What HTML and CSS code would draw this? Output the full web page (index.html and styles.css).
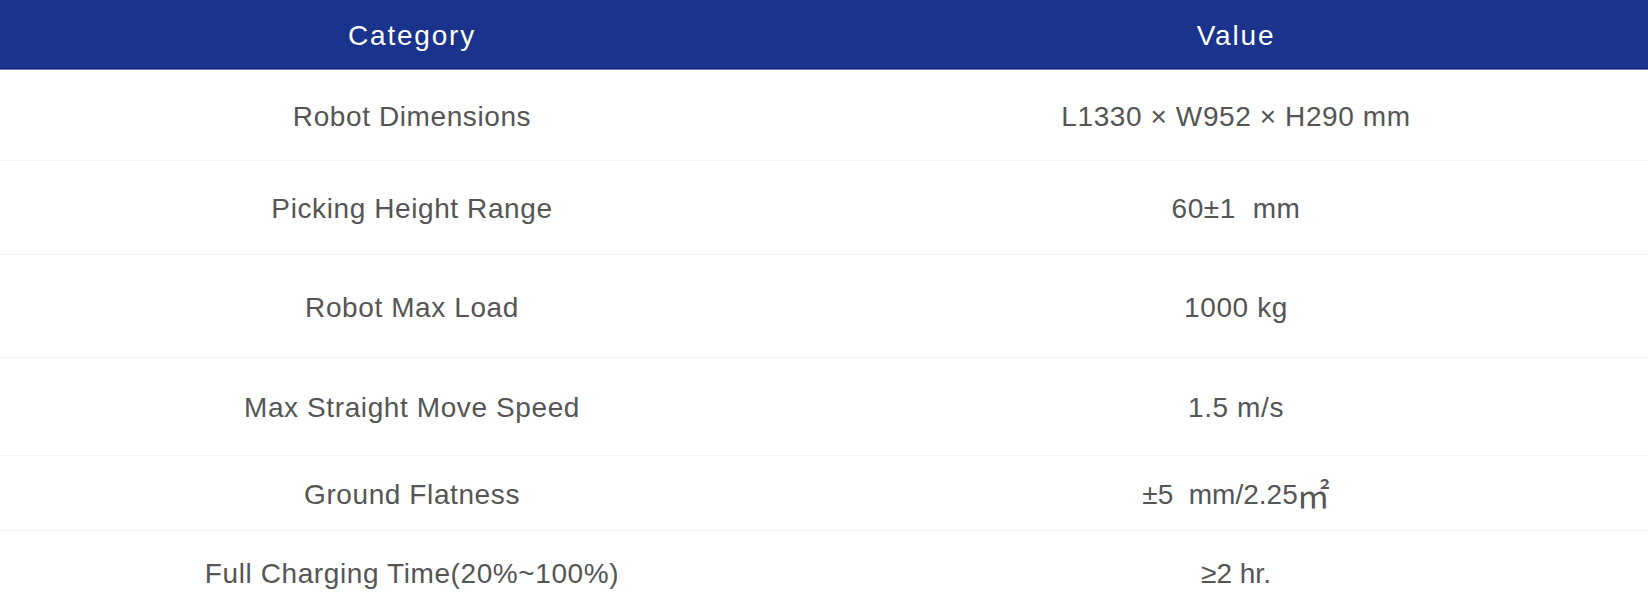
FILE: index.html
```html
<!DOCTYPE html>
<html>
<head>
<meta charset="utf-8">
<link rel="stylesheet" href="styles.css">
</head>
<body>
<div class="spec">
  <div class="row head"><div class="cell">Category</div><div class="cell">Value</div></div>
  <div class="row r1"><div class="cell">Robot Dimensions</div><div class="cell">L1330 × W952 × H290 mm</div></div>
  <div class="row r2"><div class="cell">Picking Height Range</div><div class="cell">60±1&nbsp;&nbsp;mm</div></div>
  <div class="row r3"><div class="cell">Robot Max Load</div><div class="cell">1000 kg</div></div>
  <div class="row r4"><div class="cell">Max Straight Move Speed</div><div class="cell">1.5 m/s</div></div>
  <div class="row r5"><div class="cell">Ground Flatness</div><div class="cell alt">±5&nbsp;&nbsp;mm/2.25<span class="sqm">㎡</span></div></div>
  <div class="row r6"><div class="cell">Full Charging Time(20%~100%)</div><div class="cell alt">≥2 hr.</div></div>
</div>
</body>
</html>
```
FILE: styles.css
```css
html, body {
  margin: 0;
  padding: 0;
  background: #ffffff;
}
.spec {
  width: 1648px;
  display: flex;
  flex-direction: column;
  font-family: "Liberation Sans", Arial, sans-serif;
  font-size: 28px;
  letter-spacing: 0.6px;
  color: #555555;
}
.row {
  display: grid;
  grid-template-columns: 1fr 1fr;
  border-bottom: 1px solid #f3f3f3;
}
.cell {
  display: flex;
  align-items: center;
  justify-content: center;
  white-space: nowrap;
  padding-top: 3px;
}
.head {
  height: 68px;
  background: #1a338c;
  color: #ffffff;
  letter-spacing: 1.8px;
  border-bottom: 1px solid #0f236f;
  box-shadow: 0 1px 0 #7085c9;
  margin-bottom: 1px;
}
.cell.alt {
  letter-spacing: 0;
}
.sqm {
  font-family: "Noto Sans CJK SC", sans-serif;
  font-size: 33px;
  line-height: 0;
  margin-left: -1px;
  position: relative;
  top: -1px;
}
.r1 { height: 90px; }
.r2 { height: 93px; }
.r3 { height: 102px; }
.r4 { height: 97px; }
.r5 { height: 74px; }
.r6 { height: 82px; border-bottom: none; }
```
